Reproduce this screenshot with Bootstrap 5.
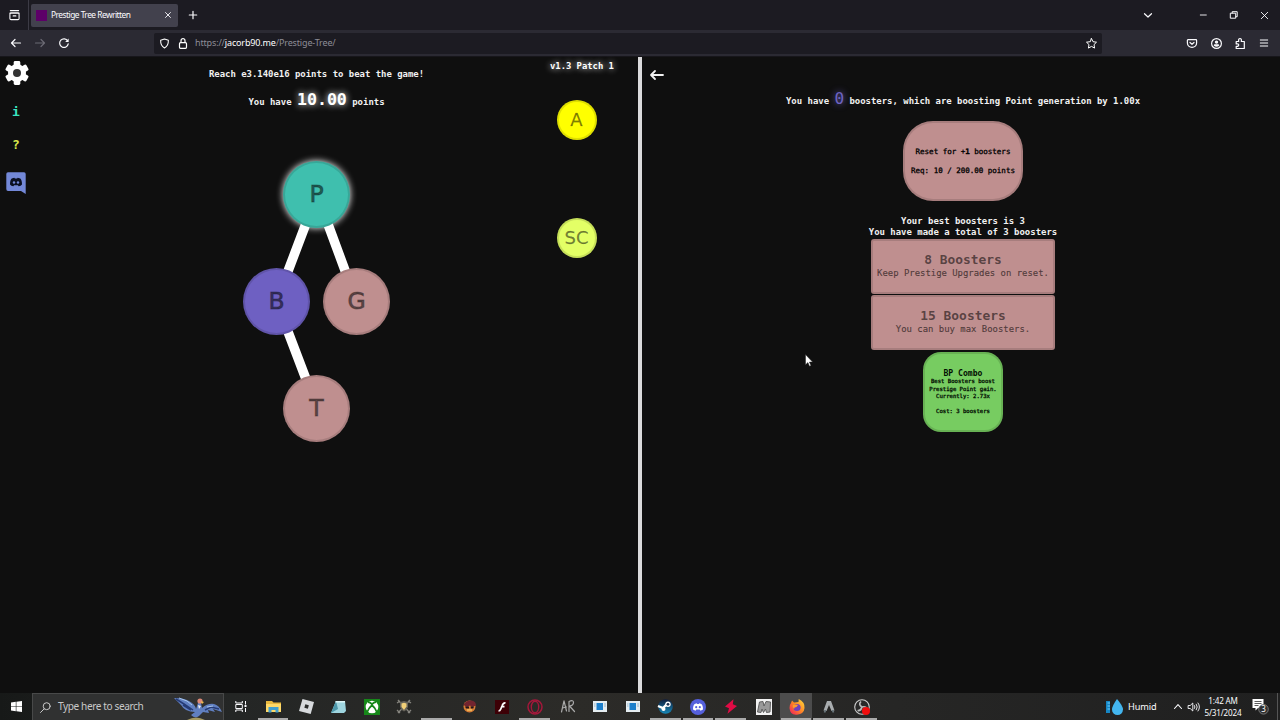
<!DOCTYPE html>
<html lang="en">
<head>
<meta charset="utf-8">
<meta name="viewport" content="width=device-width, initial-scale=1">
<title>Prestige Tree Rewritten</title>
<link href="https://cdn.jsdelivr.net/npm/bootstrap@5.3.0/dist/css/bootstrap.min.css" rel="stylesheet">
<style>
  body { height: 720px; background: #0f0f0f; font-family: "Noto Sans", "Open Sans", sans-serif; color: #fbfbfe; }
  svg { display: block; flex: none; overflow: visible; }
  .ln { fill: none; stroke: currentColor; stroke-linecap: round; stroke-linejoin: round; stroke-width: 1.2; }

  /* browser window */
  .tabstrip { height: 30px; background: #1c1b22; }
  .overview { width: 29px; border-right: 1px solid #3c3b45; }
  .tab-active { width: 147px; height: 23px; margin-left: 2px; padding: 0 6px 0 5px; background: #42414d; border-radius: 2px; font-size: 8.4px; }
  .tab-title { letter-spacing: -.52px; }
  .favicon { width: 11px; height: 11px; background: #5d0068; }
  .toolbar { height: 27px; background: #2b2a33; border-bottom: 1px solid #17161b; }
  .urlbar { width: 948px; height: 21px; background: #1c1b22; border-radius: 2px; font-size: 9px; color: #8d8c96; }
  .slot { display: flex; align-items: center; justify-content: center; flex: none; }

  /* game */
  .game { height: 636px; font: bold 9px/11px "DejaVu Sans Mono", monospace; color: #f1f1f1; }
  .pane-left { width: 638px; }
  .divider { width: 4px; background: #dadadc; }
  .pane-right { width: 638px; }
  .side { width: 34px; padding-top: 4px; }
  .side span { font-size: 13px; line-height: 14px; }
  .goal { left: 0; top: 12px; width: 633px; font-size: 8.95px; }
  .big { font-size: 16.6px; line-height: 18px; text-shadow: 0 0 7px #fff; color: #fff; }
  .ver { left: 550px; top: 4px; text-shadow: 0 0 6px #fff; color: #fff; font-size: 8.85px; }
  .orb { position: absolute; width: 67px; height: 67px; padding-top: 1px; border: 2.5px solid rgba(0,0,0,.125); border-radius: 50%; display: flex; align-items: center; justify-content: center; font: 23.5px/1 "DejaVu Sans", sans-serif; color: rgba(0,0,0,.5); -webkit-text-stroke: 1.1px rgba(0,0,0,.3); }
  .orb-s { width: 40px; height: 40px; padding-top: 0; border-width: 2px; font-size: 18px; -webkit-text-stroke-width: .3px; }
  .locked { background: #bf8f8f; color: #000; }
  .points { margin-top: 11px; height: 27px; }
  .zero { font: 16px/16px "DejaVu Sans Mono", monospace; color: #6e64c4; text-shadow: 0 0 7px #6e64c4; }
  .reset { width: 120px; height: 80px; border: 2.5px solid rgba(0,0,0,.125); border-radius: 30px; font-size: 7.5px; line-height: 9.3px; margin-top: 5px; -webkit-text-stroke: .3px; }
  .milestone { width: 184px; height: 55px; border: 2px solid rgba(0,0,0,.125); border-radius: 3px; font-weight: normal; font-size: 8.93px; line-height: 12px; -webkit-text-stroke: .2px; margin-bottom: 1.5px; padding-top: 12px; }
  .milestone.locked { color: rgba(0,0,0,.55); }
  .milestone h3 { font-size: 12.9px; line-height: 14px; font-weight: bold; -webkit-text-stroke: 0; }
  .upgrade { width: 80px; height: 80px; border: 2px solid rgba(0,0,0,.125); border-radius: 18px; background: #77cc61; color: #031003; font-size: 5.6px; line-height: 7.4px; -webkit-text-stroke: .3px; }
  .upgrade b { font-size: 8.1px; line-height: 10px; -webkit-text-stroke: 0; }
  .pointer { left: 805px; top: 354px; }

  /* desktop taskbar */
  .taskbar { height: 27px; background: linear-gradient(90deg, #171918, #242625 18%, #2c2b28 45%, #262625 70%, #202020); }
  .search { width: 192px; height: 27px; background: #303131; border: 1px solid #484949; border-bottom: 0; color: #c9c9c9; font-size: 10.1px; }
  .search span { letter-spacing: -.4px; }
  .app { width: 32.7px; height: 27px; border-bottom: 2px solid transparent; padding: 2px 0 0 1px; }
  .open { border-image: linear-gradient(90deg, transparent 10%, #aaa 10%, #aaa 90%, transparent 90%) 2; }
  .current { background: #4c4c4c; }
  .clock { font-size: 8.1px; line-height: 12px; width: 46px; letter-spacing: -.15px; }
</style>
</head>
<body class="overflow-hidden m-0 d-flex flex-column">

<header>
  <div class="tabstrip d-flex align-items-center">
    <div class="overview h-100 slot"><svg width="11" height="12" viewBox="0 0 12 12" class="ln"><path d="M1.500 1.200h9M1 4h10v5.800q0 1.200-1.200 1.200H2.200Q1 11 1 9.800zM1 5l.8-1.300h8.400L11 5M4.500 7h3"/></svg></div>
    <div class="tab-active d-flex align-items-center">
      <span class="favicon me-1"></span><span class="tab-title flex-grow-1 text-nowrap">Prestige Tree Rewritten</span>
      <svg width="6" height="6" viewBox="0 0 6 6" class="ln me-1" style="stroke-width:.9;margin-right:1px!important"><path d="M.5.500l5 5M5.500.500l-5 5"/></svg>
    </div>
    <svg class="ln" style="margin-left:11px" width="8" height="8" viewBox="0 0 8 8"><path d="M4 .3v7.400M.3 4h7.400"/></svg>
    <div class="ms-auto d-flex align-items-center" style="margin-right:-12px">
      <div class="slot" style="width:55px"><svg class="ln" width="8" height="5" viewBox="0 0 8 5"><path d="M.5.700 4 4 7.500.700"/></svg></div>
      <div class="slot" style="width:56px"><svg class="ln" width="7" height="2" viewBox="0 0 7 2" style="stroke-width:.9"><path d="M.3 1h6"/></svg></div>
      <div class="slot" style="width:5px"><svg class="ln" width="8" height="8" viewBox="0 0 8 8" style="stroke-width:1"><path d="M.7 2.200h5v5h-5zM2.200 2V.700h5v5H6"/></svg></div>
      <div class="slot" style="width:56px"><svg class="ln" width="7" height="7" viewBox="0 0 7 7" style="stroke-width:.9"><path d="M.3.300l6.400 6.400M6.700.300.300 6.700"/></svg></div>
    </div>
  </div>
  <div class="toolbar d-flex align-items-center">
    <div class="slot" style="width:32px"><svg class="ln" width="10" height="8" viewBox="0 0 10 8"><path d="M9.500 4h-9M4 .5.500 4 4 7.500"/></svg></div>
    <div class="slot" style="width:16px;color:#6b6a74"><svg class="ln" width="10" height="8" viewBox="0 0 10 8"><path d="M.5 4h9M6 .5 9.500 4 6 7.500"/></svg></div>
    <div class="slot" style="width:32px"><svg class="ln" width="10" height="10" viewBox="0 0 10 10"><path d="M8.700 3A4.300 4.300 0 1 0 9.200 5.800"/><path d="M9.600.500v3.400H6.200z" fill="currentColor" stroke="none"/></svg></div>
    <div class="urlbar d-flex align-items-center" style="margin-left:74px">
      <div class="slot text-white" style="width:21px"><svg class="ln" width="9" height="11" viewBox="0 0 10 11"><path d="M5 .5 9.300 2C9.400 6 8 9 5 10.500 2 9 .600 6 .700 2z"/></svg></div>
      <div class="slot text-white" style="width:16px"><svg class="ln" width="8" height="11" viewBox="0 0 8 11"><rect x=".5" y="4.700" width="7" height="5.600" rx="1"/><path d="M2 4.500V2.700a2 2 0 0 1 4 0v1.800"/></svg></div>
      <span class="ms-1 text-nowrap" style="letter-spacing:-.15px">https://<span class="text-white">jacorb90.me</span>/Prestige-Tree/</span>
      <div class="slot ms-auto text-white" style="width:22px"><svg class="ln" width="11" height="11" viewBox="0 0 11 11" style="stroke-width:1"><path d="m5.500.6 1.500 3.100 3.500.5L8 6.600l.6 3.500-3.100-1.700-3.100 1.700L3 6.600.500 4.200 4 3.700z"/></svg></div>
    </div>
    <div class="ms-auto d-flex" style="padding-right:4px">
      <div class="slot" style="width:24px"><svg class="ln" width="10" height="9" viewBox="0 0 10 9"><path d="M1 .7h8q.6 0 .6.700v2.600a4.600 4.300 0 0 1-9.200 0V1.400Q.400.700 1 .700zM3 3.500l2 1.800 2-1.800"/></svg></div>
      <div class="slot" style="width:24px"><svg class="ln" width="11" height="11" viewBox="0 0 11 11"><circle cx="5.500" cy="5.500" r="4.900"/><circle cx="5.500" cy="4.100" r="1.700" fill="currentColor" stroke="none"/><path d="M2.700 7.500q0-1.200 1.200-1.200h3.200q1.200 0 1.200 1.200-2.800 2.500-5.600 0z" fill="currentColor" stroke="none"/></svg></div>
      <div class="slot" style="width:24px"><svg class="ln" width="11" height="11" viewBox="0 0 11 11"><path d="M1.200 3.500h2.500q-.5-3 1.300-3t1.300 3h3v7H1.200V8.300q2.500.3 2.500-1.200T1.200 6z"/></svg></div>
      <div class="slot" style="width:24px"><svg class="ln" width="8" height="8" viewBox="0 0 8 8" style="stroke-width:1"><path d="M.3 1h7.400M.3 4h7.400M.3 7h7.400"/></svg></div>
    </div>
  </div>
</header>

<main class="game d-flex">
  <section class="pane-left position-relative">
    <nav class="side d-flex flex-column align-items-center">
      <svg width="24" height="24" viewBox="-12 -12 24 24" fill="#fff"><circle r="9"/><rect x="-3.300" y="-12" width="6.600" height="24" rx="1.400"/><rect x="-3.300" y="-12" width="6.600" height="24" rx="1.400" transform="rotate(60)"/><rect x="-3.300" y="-12" width="6.600" height="24" rx="1.400" transform="rotate(120)"/><circle r="4" fill="#333"/></svg>
      <span style="color:#39e5c0;margin-top:20px;margin-right:2px">i</span>
      <span style="color:#d9e84a;margin-top:19px;margin-right:2px">?</span>
      <svg style="margin-right:2px;margin-top:20px" width="20" height="22" viewBox="0 0 20 22"><path d="M2 .3h16q1.700 0 1.700 1.700v20L15 19H2Q.3 19 .3 17V2Q.3.300 2 .300z" fill="#7388d8"/><path d="M4 12.500Q4 8 5.700 6.500l2.600-.8.600.8h2.200l.6-.8 2.600.8Q16 8 16 12.500q-1.200 1.800-3.400 1.700l-.7-1H8.100l-.7 1Q5.200 14.300 4 12.500z" fill="#0b1022"/><circle cx="8" cy="10.500" r="1.200" fill="#7388d8"/><circle cx="12" cy="10.500" r="1.200" fill="#7388d8"/></svg>
    </nav>
    <div class="goal position-absolute text-center">
      <div>Reach e3.140e16 points to beat the game!</div>
      <div class="points">You have <span class="big">10.00</span> points</div>
    </div>
    <div class="ver position-absolute">v1.3 Patch 1</div>
    <svg class="position-absolute top-0 start-0" width="638" height="636" viewBox="0 57 638 636" stroke="#fff" stroke-width="9.500"><path d="M317 194.500 276.500 301.500M317 194.500 356.500 301.500M276.500 301.500 317 408"/></svg>
    <div class="orb" style="left:283px;top:104px;background:#3fbfae;box-shadow:0 0 7px #fff">P</div>
    <div class="orb" style="left:243px;top:210.500px;background:#6e60c2">B</div>
    <div class="orb locked" style="left:323px;top:210.500px;color:rgba(0,0,0,.5)">G</div>
    <div class="orb locked" style="left:283px;top:317.500px;color:rgba(0,0,0,.5)">T</div>
    <div class="orb orb-s" style="left:556.500px;top:43px;background:#ff0">A</div>
    <div class="orb orb-s" style="left:556.500px;top:161px;background:#e3ff66">SC</div>
  </section>
  <div class="divider"></div>
  <section class="pane-right position-relative d-flex flex-column align-items-center" style="padding-left:4px">
    <svg class="ln position-absolute" style="left:8px;top:13px;stroke-width:1.800" width="14" height="10" viewBox="0 0 14 10"><path d="M13 5H1M5 1 1 5l4 4"/></svg>
    <div class="text-nowrap" style="margin-top:34px;height:25px;font-size:8.950px;line-height:16px">You have <span class="zero">0</span> boosters, which are boosting Point generation by 1.00x</div>
    <button class="reset locked p-0">Reset for +<b>1</b> boosters<br><br>Req: 10 / 200.00 points</button>
    <div class="text-center text-nowrap" style="margin-top:14px;margin-bottom:1px;padding-top:.5px;font-size:8.950px">Your best boosters is 3<br>You have made a total of 3 boosters</div>
    <div class="milestone locked text-center text-nowrap"><h3 class="m-0">8 Boosters</h3>Keep Prestige Upgrades on reset.</div>
    <div class="milestone locked text-center text-nowrap"><h3 class="m-0">15 Boosters</h3>You can buy max Boosters.</div>
    <button class="upgrade p-0 text-nowrap"><b>BP Combo</b><br>Best Boosters boost<br>Prestige Point gain.<br>Currently: 2.73x<br><br>Cost: 3 boosters</button>
  </section>
</main>

<footer class="taskbar d-flex align-items-center">
  <div class="slot" style="width:32px"><svg width="11" height="11" viewBox="0 0 11 11" fill="#fff"><path d="M0 1.500 4.800.800v4.400H0zM5.400.700 11 0v5.200H5.400zM0 5.800h4.800v4.400L0 9.500zM5.400 5.800H11V11l-5.600-.700z"/></svg></div>
  <div class="search d-flex align-items-center">
    <svg class="ln" style="margin:0 7px 0 7px;stroke-width:1" width="11" height="11" viewBox="0 0 11 11"><circle cx="6.700" cy="4.200" r="3.500"/><path d="M4.200 6.800.500 10.500"/></svg>
    <span class="text-nowrap">Type here to search</span>
    <svg style="margin-left:auto;margin-right:1px" width="48" height="25" viewBox="0 0 48 25"><path d="M13 25q9-5 18 0z" fill="#a69a62"/><path d="M21 17Q11 17 7 10L0 3q10 0 15 3 6 3 7 8l2-6h3l1 5q6-5 12-4 5 1 8 8l-9-3 2 3-7-2 1 3-6-1-4 4q-4 3-8-1z" fill="#607fc0"/><path d="m2 4 8 5 9 6M31 15l6-3 8 2M9 10l8 5" stroke="#263b75" stroke-width="1.500" fill="none"/><path d="m5 3 8 3 5 4M33 12l6-1" stroke="#a9c6ec" fill="none"/><circle cx="26" cy="6" r="2.600" fill="#df8b79"/><path d="m27 6 3 1-2 2z" fill="#edbd4b"/><path d="m24 10 3 1-2 3z" fill="#eee"/></svg>
  </div>
  <div class="app slot"><svg width="12" height="11" viewBox="0 0 12 11" class="ln" style="stroke-width:1;stroke-linecap:butt"><path d="M.8 0v2h6.500V0M.8 11V9h6.500v2M.8 3.500h6.500v4H.8zM10.500 0v3.500M10.500 7v4"/><path d="M9.500 4h2v2h-2z" fill="currentColor" stroke="none"/></svg></div>
  <div class="app open slot"><svg width="15" height="13" viewBox="0 0 15 13"><path d="M0 1h6l1.500 1.500H15V12H0z" fill="#e9b83f"/><path d="M0 4h15v8H0z" fill="#ffd968"/><path d="M2.500 12.500V7h10v5.500h-3V10h-4v2.500z" fill="#429fcf"/></svg></div>
  <div class="app slot"><svg width="15" height="15" viewBox="0 0 15 15"><path d="M3.500 0 15 3l-3.300 12L0 12z" fill="#d7dadd"/><path d="m6.300 5.300 3.500.9-.9 3.500-3.500-.9z" fill="#2a2c2c"/></svg></div>
  <div class="app slot"><svg width="15" height="14" viewBox="0 0 15 14"><path d="M5 1h9l1 10-2 2H0z" fill="#9ed5df"/><path d="m5 1 2 8-7 4z" fill="#4d98aa"/><path d="M4.500 1H14v1.500H4.500z" fill="#ddf5f7"/></svg></div>
  <div class="app slot"><svg width="16" height="16" viewBox="0 0 16 16"><path d="M0 0h16v16H0z" fill="#168719"/><circle cx="8" cy="8" r="6.300" fill="#fff"/><path d="M4 3q2 0 4 2.200Q10 3 12 3M3.200 13Q5 8.500 8 6.300q3 2.200 4.800 6.700" fill="none" stroke="#168719" stroke-width="1.900"/></svg></div>
  <div class="app slot"><svg width="14" height="15" viewBox="0 0 14 15"><path d="M1 1l12 13M13 1 1 14M0 4l3-2M14 4l-3-2M0 11l3 3M14 11l-3 3" stroke="#85847e" stroke-width="1.300"/><path d="M3 3l4-1 4 1v5q-1 3-4 4.500Q4 11 3 8z" fill="#66635a"/><path d="m4.500 4.500 2.500-.8 2.500.8v3L7 11 4.500 8z" fill="#f1cf78"/></svg></div>
  <div class="app open slot"></div>
  <div class="app slot"><svg width="13" height="13" viewBox="0 0 13 13"><circle cx="6.500" cy="6.500" r="6" fill="#d67d35"/><path d="M.5 5Q3 0 8 .500t5 5L9 7 7 5.500 4 7z" fill="#72242f"/><path d="M2 6.500h4v2H3zM7.500 6.500H11l-.7 2H8z" fill="#22151a"/><path d="M4 10h5" stroke="#f5d16b" stroke-width="1.200"/></svg></div>
  <div class="app slot"><svg width="14" height="14" viewBox="0 0 14 14"><path d="M0 0h14v14H0z" fill="#3d0006"/><path d="M10.500 2.800Q8 2.500 7 6L5.800 9Q5 11 3.500 11M6.500 6.700h3" fill="none" stroke="#fff" stroke-width="1.700"/></svg></div>
  <div class="app open slot"><svg width="16" height="16" viewBox="0 0 16 16" fill="none" stroke="#a5173b"><circle cx="8" cy="8" r="7" stroke-width="1.500"/><ellipse cx="8" cy="8" rx="3.700" ry="5.700" stroke-width="1.400"/></svg></div>
  <div class="app slot"><svg width="14" height="13" viewBox="0 0 14 13" class="ln" style="color:#aaa;stroke-width:1.200"><path d="M.5 12 3 .8 5.500 11M1.500 8l4-1M8 11.500V1.500q4.500-2 4.500 1T8.500 6l5 5.500"/></svg></div>
  <div class="app slot"><svg width="14" height="11" viewBox="0 0 14 11"><path d="M0 0h14v11H0z" fill="#e5edf1"/><path d="M3.500 2H10v7H3.500z" fill="#1c7fcb"/><path d="M1 3h1.500M1 5h1.500M11 3h2M11 5h2" stroke="#94b6cb"/></svg></div>
  <div class="app slot"><svg width="14" height="11" viewBox="0 0 14 11"><path d="M0 0h14v11H0z" fill="#e5edf1"/><path d="M3.500 2H10v7H3.500z" fill="#1c7fcb"/><path d="M1 3h1.500M1 5h1.500M11 3h2M11 5h2" stroke="#94b6cb"/></svg></div>
  <div class="app open slot"><svg width="15" height="15" viewBox="0 0 15 15"><defs><linearGradient id="st" x2="0" y2="1"><stop stop-color="#101d3d"/><stop offset="1" stop-color="#1688b8"/></linearGradient></defs><circle cx="7.500" cy="7.500" r="7.300" fill="url(#st)"/><path d="m0 7 5 2 4-4" stroke="#fff" stroke-width="2.400" fill="none"/><circle cx="10" cy="5.300" r="2.700" fill="#fff"/><circle cx="10" cy="5.300" r="1.400" fill="#1d3153"/><circle cx="5.500" cy="10" r="2" fill="#fff"/></svg></div>
  <div class="app open slot"><svg width="16" height="16" viewBox="0 0 16 16"><circle cx="8" cy="8" r="8" fill="#5560dc"/><path d="M3 10.500Q3 6 4.700 5l2-.7.500.8h1.600l.5-.8 2 .7Q13 6 13 10.500l-2.500 1.300-.8-1.200H6.300l-.8 1.200z" fill="#fff"/><circle cx="6.200" cy="8.200" r="1.100" fill="#5560dc"/><circle cx="9.800" cy="8.200" r="1.100" fill="#5560dc"/></svg></div>
  <div class="app open slot"><svg width="12" height="15" viewBox="0 0 12 15"><path d="M8.500.3 0 7.500l4 1.700-1.500 5.500L12 7 7.800 5.300z" fill="#e00b45"/></svg></div>
  <div class="app slot"><svg width="16" height="16" viewBox="0 0 16 16"><path d="M0 0h16v16H0z" fill="#f2f2f2"/><path d="M1.500 13 3.500 3 7 2.500 8 7l2-4.500 4.500.5L14 13l-3.500.5L9.500 10l-2 3.500L6 10l-1 3.500z" fill="#999" stroke="#555" stroke-width=".9"/></svg></div>
  <div class="app open current slot"><svg width="16" height="16" viewBox="0 0 16 16"><defs><linearGradient id="fx" x1="1" y1="0" x2="0" y2="1"><stop stop-color="#ffe13c"/><stop offset=".5" stop-color="#ff8526"/><stop offset="1" stop-color="#f01662"/></linearGradient></defs><path d="M2 4 3 1.500l2 2L9.500 3 9.700 0Q16 3 15.500 9T8 15.700.500 9Q.3 6 2 4z" fill="url(#fx)"/><circle cx="8" cy="8.500" r="3.600" fill="#7042bd"/><path d="M4 6q3-1 5 0L7.500 8Q5 8 5 10 3 8 4 6z" fill="#ff9c2a"/></svg></div>
  <div class="app open slot"><svg width="14" height="14" viewBox="0 0 14 14"><path d="M5 1h4l3.500 9.500-3 .5L7 5l-2.500 6-3-.5z" fill="#a9adaf"/><path d="m3.500 10-1 2.500M10.500 10l1 2.500" stroke="#68747a" stroke-width="1.800"/></svg></div>
  <div class="app open slot"><svg width="16" height="16" viewBox="0 0 16 16"><circle cx="8" cy="8" r="7.300" fill="#292929" stroke="#ccc" stroke-width="1.100"/><path d="M7 2.500q-3 3 1 5.500 4-1 5 2M8 8q-1 4-4.500 3.500" fill="none" stroke="#bbb" stroke-width="1.700"/><circle cx="12" cy="12" r="4" fill="#f00d0d"/></svg></div>
  <div class="ms-auto d-flex align-items-center h-100">
    <svg width="17" height="16" viewBox="0 0 17 16"><path d="M0 2h4v12H0z" fill="#1686c4"/><path d="M1.500 4H4M1.500 7H4M1.500 10H4" stroke="#6ed0ff"/><path d="M11 0q6 7 6 10.500a5.500 5.500 0 0 1-11 0Q6 7 11 0z" fill="#43b5ee"/></svg>
    <span style="font-size:9.200px;margin-left:5px;width:44px;letter-spacing:-.1px">Humid</span>
    <svg class="ln" style="margin-left:2px;stroke-width:1.100" width="8" height="5" viewBox="0 0 8 5"><path d="M.5 4.500 4 .7l3.500 3.800"/></svg>
    <svg class="ln" style="margin-left:6px;stroke-width:.9" width="12" height="10" viewBox="0 0 12 10"><path d="M.5 3.500h1.700L4.800 1v8L2.200 6.500H.5zM6.500 3.500q1 1.500 0 3M8.300 2.200q2 2.800 0 5.600M10 1q3 4 0 8"/></svg>
    <div class="clock text-center text-nowrap">1:42 AM<br>5/31/2024</div>
    <svg style="margin:0 8px 0 6px" width="17" height="17" viewBox="0 0 17 17"><path d="M.5 1h11v9H6L3.500 12.500V10h-3z" fill="#fff"/><path d="M2.500 3.500h7M2.500 5.500h7M2.500 7.500h4" stroke="#333" stroke-width=".8"/><circle cx="11.500" cy="11.300" r="4.800" fill="#303030" stroke="#888" stroke-width=".8"/><text x="11.500" y="14.200" text-anchor="middle" font-size="8" fill="#fff">3</text></svg>
    <span style="width:2px;height:27px;border-left:1px solid #555;margin-right:1px"></span>
  </div>
</footer>

<svg class="pointer position-absolute" width="8" height="13" viewBox="0 0 8 13"><path d="M.5.500v10.300l2.400-2.200 1.600 3.700 1.500-.7-1.600-3.500h3.200z" fill="#fff" stroke="#222" stroke-width=".5"/></svg>
<script src="https://cdn.jsdelivr.net/npm/bootstrap@5.3.0/dist/js/bootstrap.bundle.min.js"></script>
</body>
</html>
